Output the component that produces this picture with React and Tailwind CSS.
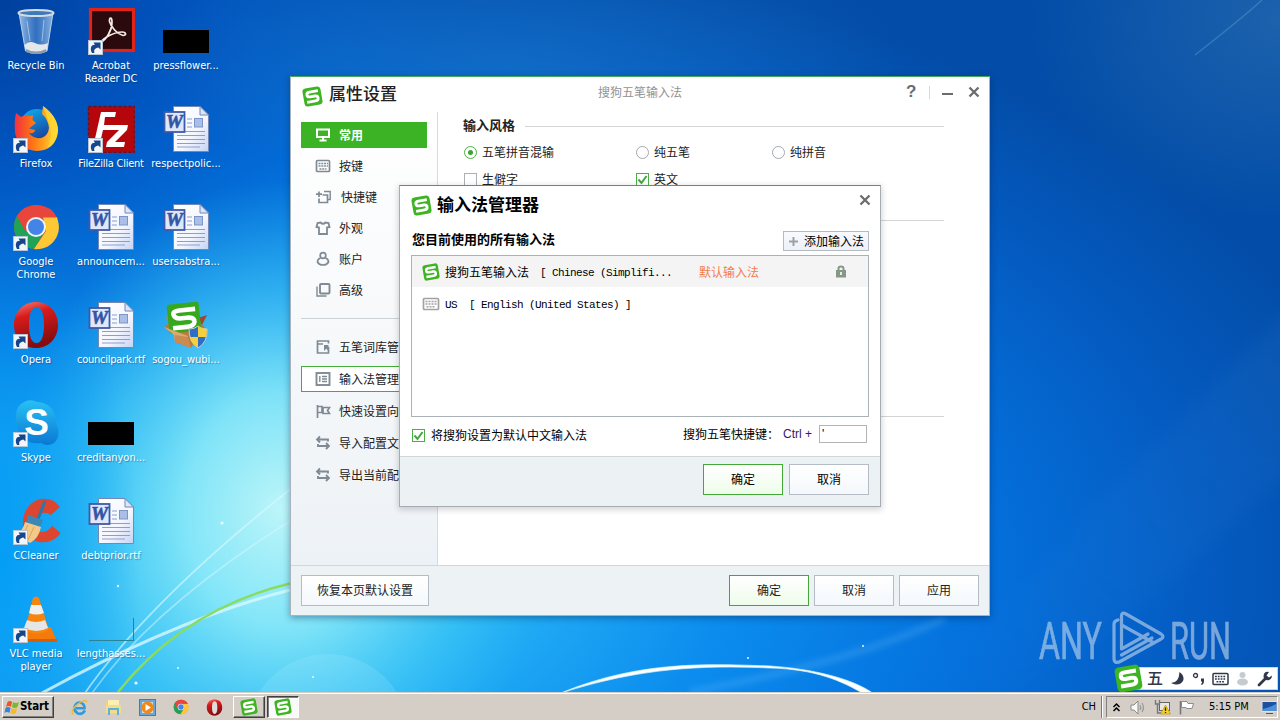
import React from "react";

const CJK = "font-['Noto_Sans_CJK_SC',sans-serif]";

function Wallpaper() {
  return (
    <svg className="absolute inset-0 h-full w-full" viewBox="0 0 1280 720" preserveAspectRatio="none">
      <defs>
        <radialGradient id="wBase" gradientUnits="userSpaceOnUse" cx="0" cy="0" r="1" gradientTransform="translate(250 570) scale(1150 640)">
          <stop offset="0" stopColor="#4fd0fa" />
          <stop offset=".2" stopColor="#27b4f7" />
          <stop offset=".42" stopColor="#0b8cee" />
          <stop offset=".64" stopColor="#0470dc" />
          <stop offset=".85" stopColor="#0459be" />
          <stop offset="1" stopColor="#034da8" />
        </radialGradient>
        <radialGradient id="wGlow" gradientUnits="userSpaceOnUse" cx="0" cy="0" r="1" gradientTransform="translate(280 510) scale(270 330)">
          <stop offset="0" stopColor="#bcf5f9" />
          <stop offset=".35" stopColor="#8ceaf8" stopOpacity=".88" />
          <stop offset=".7" stopColor="#48cdf4" stopOpacity=".5" />
          <stop offset="1" stopColor="#30bdf0" stopOpacity="0" />
        </radialGradient>
        <radialGradient id="wLeft" gradientUnits="userSpaceOnUse" cx="0" cy="0" r="1" gradientTransform="translate(0 560) scale(140 330)">
          <stop offset="0" stopColor="#009cf6" stopOpacity=".9" />
          <stop offset="1" stopColor="#0094f0" stopOpacity="0" />
        </radialGradient>
        <radialGradient id="wTopLeft" gradientUnits="userSpaceOnUse" cx="0" cy="0" r="1" gradientTransform="translate(0 0) scale(420 430)">
          <stop offset="0" stopColor="#00409e" />
          <stop offset=".4" stopColor="#0050bc" stopOpacity=".75" />
          <stop offset="1" stopColor="#0068d0" stopOpacity="0" />
        </radialGradient>
        <radialGradient id="wTop" gradientUnits="userSpaceOnUse" cx="0" cy="0" r="1" gradientTransform="translate(520 60) scale(380 130)">
          <stop offset="0" stopColor="#2486cc" stopOpacity=".35" />
          <stop offset="1" stopColor="#2c8ad0" stopOpacity="0" />
        </radialGradient>
        <radialGradient id="wCorner" gradientUnits="userSpaceOnUse" cx="0" cy="0" r="1" gradientTransform="translate(1280 20) scale(250 200)">
          <stop offset="0" stopColor="#4a88b4" stopOpacity=".35" />
          <stop offset="1" stopColor="#4a88b4" stopOpacity="0" />
        </radialGradient>
        <linearGradient id="wRay" x1="0" y1="1" x2="1" y2="0">
          <stop offset="0" stopColor="#7cc0f4" stopOpacity="0" />
          <stop offset="1" stopColor="#7cc0f4" stopOpacity=".2" />
        </linearGradient>
        <filter id="soft" x="-20%" y="-20%" width="140%" height="140%"><feGaussianBlur stdDeviation="10" /></filter>
        <filter id="soft2" x="-20%" y="-50%" width="140%" height="200%"><feGaussianBlur stdDeviation="3" /></filter>
        <filter id="soft1" x="-20%" y="-20%" width="140%" height="140%"><feGaussianBlur stdDeviation=".7" /></filter>
      </defs>
      <rect width="1280" height="720" fill="url(#wBase)" />
      <rect width="420" height="430" fill="url(#wTopLeft)" />
      <rect width="1280" height="300" fill="url(#wTop)" />
      <rect x="1000" width="280" height="240" fill="url(#wCorner)" />
      <rect y="170" width="560" height="550" fill="url(#wGlow)" />
      <rect y="220" width="150" height="500" fill="url(#wLeft)" />
      <path d="M1195 55Q1240 20 1262 0" stroke="#6aa0d0" strokeWidth="1.500" opacity=".4" fill="none" />
      <path d="M840 720Q1000 620 1100 500L1300 300V460Q1100 660 960 720Z" fill="url(#wRay)" opacity=".35" filter="url(#soft)" />
      <path d="M690 692Q860 660 945 618" stroke="#7cc8ff" strokeWidth="6" opacity=".25" fill="none" filter="url(#soft2)" />
      <circle cx="328" cy="735" r="81" fill="#b9f1ff" opacity=".16" />
      <path d="M561 693C640 660 710 664 770 666C812 669 852 678 874 694L864 694C842 681 815 669 770 668C700 665 640 668 561 693Z" fill="#fff" stroke="#d9f3ff" strokeWidth=".7" filter="url(#soft1)" />
      <g fill="none" filter="url(#soft1)">
        <path d="M42 693Q180 618 290 590" stroke="#d8f8ff" strokeWidth="3" opacity=".8" />
        <path d="M85 693Q150 600 292 488" stroke="#d8f8ff" strokeWidth="1.800" opacity=".65" />
        <path d="M92 693Q155 605 292 520" stroke="#d8f8ff" strokeWidth="1.500" opacity=".5" />
        <path d="M118 692Q185 608 292 583" stroke="#8bdc5c" strokeWidth="2.400" />
      </g>
      <g fill="#e6fbff">
        <circle cx="222" cy="523" r="1.600" /><circle cx="118" cy="586" r="1.200" /><circle cx="136" cy="683" r="1.600" /><circle cx="178" cy="668" r="1" /><circle cx="748" cy="658" r="1" /><circle cx="863" cy="646" r="1" /><circle cx="313" cy="677" r="1" />
      </g>
    </svg>
  );
}

function SogouLogo({ size = 20 }) {
  return (
    <svg width={size} height={size} viewBox="0 0 24 24" className="block shrink-0">
      <g transform="rotate(-10 12 12)">
        <rect x="1.6" y="1.6" width="20.8" height="20.8" rx="3.6" fill="#3eb422" />
        <path d="M19.2 6.500H9.400Q6 6.500 6 9.200T9.400 11.900H14.800Q18 11.900 18 14.700T14.600 17.500H4.800" fill="none" stroke="#fff" strokeWidth="3.300" />
      </g>
    </svg>
  );
}

function Shortcut() {
  return (
    <svg className="absolute bottom-[-1px] left-[1px]" width="15" height="15" viewBox="0 0 15 15">
      <rect x=".5" y=".5" width="14" height="14" fill="#f2f6fa" stroke="#b8c4d0" />
      <path d="M4 13C1.500 8 3.500 4.500 7 4.800L5.500 2.500H12.500V9.500L10.300 7.500C7 8 5.500 10 6.500 13Z" fill="#16458c" />
    </svg>
  );
}

function WordDoc() {
  return (
    <svg width="48" height="48" viewBox="0 0 48 48">
      <defs><linearGradient id="doc" x1="0" y1="0" x2="1" y2="1"><stop offset="0" stopColor="#fff" /><stop offset=".6" stopColor="#f4f6ff" /><stop offset="1" stopColor="#c4d2f2" /></linearGradient></defs>
      <path d="M11.500 1.500H38L46.500 10V46.500H11.500Z" fill="url(#doc)" stroke="#7388b4" />
      <path d="M38 1.500V10H46.500Z" fill="#dce6fa" stroke="#7388b4" />
      <path d="M25 14H30M25 18H30M25 22H30M15 26.500H43M15 30.500H43M15 34.500H43M15 38.500H43M15 42H38" stroke="#8a9fd0" strokeWidth="1.100" />
      <rect x="32.500" y="13.500" width="8" height="8.500" fill="#a9bfe8" stroke="#7c94c8" />
      <rect x="2.500" y="7" width="20" height="20" fill="#dfe8fa" stroke="#3d5aa8" strokeWidth="1.800" />
      <text x="12.500" y="23" fontFamily="Liberation Serif, serif" fontSize="18" fontWeight="700" fontStyle="italic" fill="#3454a4" stroke="#3454a4" strokeWidth=".6" textAnchor="middle" textLength="17" lengthAdjust="spacingAndGlyphs">W</text>
    </svg>
  );
}

function RecycleBin() {
  return (
    <svg width="48" height="48" viewBox="0 0 48 48">
      <defs><linearGradient id="bin" x1="0" x2="1"><stop offset="0" stopColor="#c8e2f8" stopOpacity=".75" /><stop offset=".5" stopColor="#6ea4dc" stopOpacity=".45" /><stop offset="1" stopColor="#b8d8f0" stopOpacity=".75" /></linearGradient></defs>
      <path d="M7 6L13.500 44Q24 49 35 44L41 6Z" fill="url(#bin)" stroke="#b4d0ea" strokeWidth="1" />
      <path d="M12.500 38Q17 33 23 36T36 36L35 43Q24 48 13.500 43Z" fill="#e4e8ea" />
      <path d="M14 42Q24 47 34 42V45Q24 49 14 45Z" fill="#8d9ca8" />
      <ellipse cx="24" cy="6" rx="17.500" ry="3" fill="#3f79bc" stroke="#d5dce2" strokeWidth="2" />
      <path d="M15 14L18 34M32 13L30 34" stroke="#e8f4ff" strokeWidth="1" opacity=".5" />
    </svg>
  );
}

function Acrobat() {
  return (
    <svg width="48" height="48" viewBox="0 0 48 48">
      <rect x="3.500" y="2.500" width="43" height="41" fill="#2a0a0c" stroke="#e2231a" strokeWidth="3.200" />
      <path d="M13 36C19 33 25 24 25 15C25 10 22 10 22.500 14.500C24 20 30 27 36 28.500C40 28.500 39 25 35 25C28 25 17 30 13 36Z" fill="none" stroke="#f6eaea" strokeWidth="1.700" />
    </svg>
  );
}

function Firefox() {
  return (
    <svg width="48" height="48" viewBox="0 0 48 48">
      <defs>
        <linearGradient id="ff" x1="0" y1=".3" x2="1" y2=".3"><stop offset="0" stopColor="#f2303f" /><stop offset=".45" stopColor="#ff7a12" /><stop offset="1" stopColor="#ffdf35" /></linearGradient>
        <linearGradient id="ffg" x1="0" y1="0" x2=".5" y2="1"><stop offset="0" stopColor="#0eb4f2" /><stop offset="1" stopColor="#1a3f9c" /></linearGradient>
      </defs>
      <circle cx="25" cy="21" r="17" fill="url(#ffg)" />
      <path d="M4 8L9 12Q13 9 18 11L21 10L20.500 15L24 18L17 23.500L23 25Q22 29 17 28Q21 34 29 33Q36 31 37 23Q36 14 30 9L31 1Q46 12 46 26Q44 45 25 46Q7 45 3 28Q2 16 4 8Z" fill="url(#ff)" />
      <path d="M31 1Q46 12 46 26Q45 38 35 43Q41 33 38 21Q34 10 31 1Z" fill="#ffd932" opacity=".75" />
    </svg>
  );
}

function FileZilla() {
  return (
    <svg width="48" height="48" viewBox="0 0 48 48">
      <rect x="1.500" y="1.500" width="46" height="46" fill="#b5060c" stroke="#7c0a10" strokeWidth="1.500" strokeDasharray="3 2" />
      <path d="M14 7H29L28 12H18L17 20H26L25 25H16L13 38H7Z" fill="#fff" />
      <path d="M25 20H41L40 25L28 37H38L37 42H19L20 37L32 25H24Z" fill="#fff" />
    </svg>
  );
}

function Chrome({ size = 48 }) {
  return (
    <svg width={size} height={size} viewBox="0 0 48 48">
      <circle cx="24" cy="24" r="22" fill="#e8453c" />
      <path d="M5 13A22 22 0 0 0 22 46L33 28L24 24L14 29Z" fill="#1fa356" />
      <path d="M46 18A22 22 0 0 1 22 46L34 28L31 14H45Z" fill="#fdc833" />
      <path d="M5 13Q12 2 25 2Q40 3 45 14.500H24L14 29Z" fill="#e8453c" />
      <circle cx="24" cy="24" r="10" fill="#f4f4f4" /><circle cx="24" cy="24" r="8" fill="#4284e8" />
    </svg>
  );
}

function Opera({ size = 48 }) {
  return (
    <svg width={size} height={size} viewBox="0 0 48 48">
      <defs><linearGradient id="op" x1="0" y1="0" x2=".3" y2="1"><stop offset="0" stopColor="#f68075" /><stop offset=".35" stopColor="#d81b1b" /><stop offset="1" stopColor="#860d0d" /></linearGradient></defs>
      <path fillRule="evenodd" fill="url(#op)" d="M24 1C37 1 46 11 46 24S37 47 24 47S2 37 2 24S11 1 24 1ZM24.500 6C19 6 17 14 17 24S19 42 24.500 42S32 34 32 24S30 6 24.500 6Z" />
    </svg>
  );
}

function SogouBox() {
  return (
    <svg width="48" height="48" viewBox="0 0 48 48">
      <path d="M2 25L12 20L38 21L45 29L36 34L29 47L13 41L12 32Z" fill="#b97a44" />
      <path d="M36 17L45 14L40 24Z" fill="#a4452c" />
      <path d="M3 15L11 18L8 23Z" fill="#c9803f" />
      <g transform="rotate(-6 23 17)"><rect x="6" y="2" width="32" height="29" rx="2" fill="#36a81c" />
        <path d="M34 9H18Q11 9 12 13T20 17H27Q33 18 32 22T24 26H10" fill="none" stroke="#fff" strokeWidth="4.600" /></g>
      <path d="M2 26L26 35L22 42L13 41L12 34Z" fill="#dfa76c" /><path d="M13 34L26 36L29 47L13 41Z" fill="#c98b52" />
      <path d="M27 28Q33 28 36 25Q39 28 45 28Q46 41 36 47Q27 41 27 28Z" fill="#2e6fc6" stroke="#c8ccd0" />
      <path d="M36 25V36H44Q45 32 45 28Q39 28 36 25ZM36 36V46.500Q29 43 27.500 36Z" fill="#f4cf3e" />
    </svg>
  );
}

function Skype() {
  return (
    <svg width="48" height="48" viewBox="0 0 48 48">
      <defs><linearGradient id="sk" x1="0" y1="0" x2="0" y2="1"><stop offset="0" stopColor="#28c0f4" /><stop offset="1" stopColor="#0a78d4" /></linearGradient></defs>
      <path d="M14 2Q20 0 25 3Q43 4 44 24Q50 36 42 44Q35 48 29 44Q8 46 5 26Q0 8 14 2Z" fill="url(#sk)" />
      <text x="24.500" y="36" fontFamily="Liberation Sans, sans-serif" fontWeight="700" fontSize="37" fill="#fff" textAnchor="middle">S</text>
    </svg>
  );
}

function CCleaner() {
  return (
    <svg width="48" height="48" viewBox="0 0 48 48">
      <path d="M48 10L39 18Q31 13 26 19Q21 29 29 35Q36 35 40 29L49 36Q40 47 27 45Q9 40 11 22Q14 6 28 2Q41 0 48 10Z" fill="#dc4630" />
      <path d="M33 4L26 22" stroke="#2878ae" strokeWidth="3" />
      <path d="M16 18L31 23L28 30L14 26Z" fill="#3c88b4" />
      <path d="M13 25L29 30Q27 41 18 46L4 37Q11 34 13 25Z" fill="#f4c886" /><path d="M16 28L10 40M22 30L16 43" stroke="#dba660" />
    </svg>
  );
}

function Vlc() {
  return (
    <svg width="48" height="48" viewBox="0 0 48 48">
      <path d="M11 32H39L45 47H6Z" fill="#f47b0a" /><path d="M6 44H45V47H6Z" fill="#d85d04" />
      <path d="M21 3Q24 0 27 3L37 35Q25 42 13 35Z" fill="#f8860e" />
      <path d="M19 10H29L32 18Q24 21 17 18Z" fill="#f0f0f0" /><path d="M15 25Q24 29 33 25L36 33Q25 39 12 33Z" fill="#e4e6e8" />
    </svg>
  );
}

function BlackThumb() {
  return <div className="mt-[22px] h-[23px] w-[46px] bg-black" />;
}

function OutlineThumb() {
  return <div className="mt-[22px] ml-[1px] h-[23px] w-[45px] border-r border-b border-[#2c8396]" />;
}

const desktop = [
  { label: ["Recycle Bin"], icon: <RecycleBin /> },
  { label: ["Firefox"], icon: <Firefox />, link: true },
  { label: ["Google", "Chrome"], icon: <Chrome />, link: true },
  { label: ["Opera"], icon: <Opera />, link: true },
  { label: ["Skype"], icon: <Skype />, link: true },
  { label: ["CCleaner"], icon: <CCleaner />, link: true },
  { label: ["VLC media", "player"], icon: <Vlc />, link: true },
  { label: ["Acrobat", "Reader DC"], icon: <Acrobat />, link: true },
  { label: ["FileZilla Client"], icon: <FileZilla />, link: true, tight: true },
  { label: ["announcem..."], icon: <WordDoc /> },
  { label: ["councilpark.rtf"], icon: <WordDoc />, tight: true },
  { label: ["creditanyon..."], icon: <BlackThumb /> },
  { label: ["debtprior.rtf"], icon: <WordDoc /> },
  { label: ["lengthasses..."], icon: <OutlineThumb /> },
  { label: ["pressflower..."], icon: <BlackThumb /> },
  { label: ["respectpolic..."], icon: <WordDoc /> },
  { label: ["usersabstra..."], icon: <WordDoc /> },
  { label: ["sogou_wubi..."], icon: <SogouBox /> },
];

function DesktopIcons() {
  return (
    <div className="relative grid w-[225px] grid-flow-col grid-cols-[repeat(3,75px)] grid-rows-[repeat(7,98px)] pt-[7px]">
      {desktop.map((d) => (
        <div key={d.label.join()} className="-ml-[3px] flex flex-col items-center">
          <div className="relative flex h-[47px] w-[48px] items-start justify-center">
            <div className="flex h-full items-center justify-center">{d.icon}</div>
            {d.link && <Shortcut />}
          </div>
          <div className={`mt-[5px] text-center font-['DejaVu_Sans_Condensed','DejaVu_Sans',sans-serif] text-[11px] leading-[13px] font-normal whitespace-nowrap text-white [font-stretch:condensed] [text-shadow:1px_1px_1px_rgba(0,40,90,0.4)] ${d.tight ? "tracking-[-0.25px]" : ""}`}>
            {d.label.map((l) => <div key={l}>{l}</div>)}
          </div>
        </div>
      ))}
    </div>
  );
}

const glyphs = {
  monitor: <path d="M2 2.500H14V10H2ZM8 10V13.500M4.500 13.500H11.500" strokeWidth="2" />,
  keys: <><rect x="1.500" y="2.500" width="13" height="11" rx="1" strokeWidth="1.700" /><path d="M3.500 5.500H13M3.500 8H13M4.500 11H11.500" strokeWidth="1.600" strokeDasharray="2 .8" /></>,
  quick: <><path d="M4 9.500V13.500H12.500V6H7.500" strokeWidth="1.700" /><path d="M9 2.500H15.200V10.500H13" /><path d="M4 2.500V8M1 5.200H7" strokeWidth="1.700" /></>,
  shirt: <path d="M5.500 2.500Q8 5 10.500 2.500L13.500 3L14.500 7L12 7.500V14H4V7.500L1.500 7L2.500 3Z" strokeWidth="1.800" />,
  user: <><circle cx="8" cy="4.500" r="2.800" strokeWidth="1.700" /><path d="M5.500 7Q2.500 8 2.500 11Q4 14 8 14T13.500 11Q13.500 8 10.500 7" strokeWidth="1.700" /></>,
  layers: <><rect x="5" y="2" width="9.500" height="9.500" rx="1" strokeWidth="1.900" /><path d="M2 4.500V14H11.500" /></>,
  book: <><path d="M13.500 8V14H2.500V2H13.500V4.500M2.500 5H8" strokeWidth="1.700" /><path d="M9 6H13.500V12L11.200 9.800L9 12Z" fill="currentColor" stroke="none" /></>,
  list: <><rect x="1.500" y="2" width="13" height="12" strokeWidth="1.900" /><path d="M4.800 5V11M7 5.500H12M7 8H12M7 10.500H12" /></>,
  flag: <><path d="M2.500 2V15M2.500 3.500H7V9.500H2.500M7 4.500H14.500L12.500 7.500L14.500 10.500H8V4" strokeWidth="1.700" /></>,
  swap: <path d="M5 1.500L2 4.500L5 7.500M2 4.500H13V6.500M11 8L14 11L11 14M14 11H3V9" strokeWidth="1.800" />,
};

function Glyph({ name, color = "text-[#7f8a94]" }) {
  return (
    <svg width="16" height="16" viewBox="0 0 16 16" className={`shrink-0 ${color}`} fill="none" stroke="currentColor" strokeWidth="1.400">
      {glyphs[name]}
    </svg>
  );
}

function NavItem({ icon, text, active, focused, indent }) {
  return (
    <div className={`flex h-[26px] w-[126px] items-center overflow-hidden border pl-[13px] text-[12px] whitespace-nowrap ${active ? "border-[#3cb324] bg-[#3cb324] font-bold text-white" : focused ? "border-[#42ad38] bg-white text-[#222]" : "border-transparent text-[#222]"}`}>
      <Glyph name={icon} color={active ? "text-white" : "text-[#7f8a94]"} />
      <span className={indent ? "ml-[10px]" : "ml-[8px]"}>{text}</span>
    </div>
  );
}

function Check({ checked }) {
  return (
    <span className={`flex h-[13px] w-[13px] shrink-0 items-center justify-center border bg-white ${checked ? "border-[#4caf45]" : "border-[#adb1b5]"}`}>
      {checked && <svg width="11" height="11" viewBox="0 0 11 11"><path d="M1.500 5.500L4.500 9L9.500 2" fill="none" stroke="#46a440" strokeWidth="2" /></svg>}
    </span>
  );
}

function Radio({ checked }) {
  return (
    <span className={`flex h-[13px] w-[13px] shrink-0 items-center justify-center rounded-full border bg-white ${checked ? "border-[#4caf45]" : "border-[#a5a9ad]"}`}>
      {checked && <span className="h-[5px] w-[5px] rounded-full bg-[#3ca334]" />}
    </span>
  );
}

function Option({ width, control, children }) {
  return <div className={`flex items-center gap-[5px] ${width}`}>{control}<span>{children}</span></div>;
}

function Button({ primary, wide, children }) {
  return (
    <button className={`h-[31px] border pb-px text-[12px] ${wide ? "w-[128px]" : "w-[80px]"} ${primary ? "border-[#43a838] bg-linear-to-b from-white to-[#eefcea]" : "border-[#b5bcc5] bg-linear-to-b from-white to-[#f4f8fc]"}`}>
      {children}
    </button>
  );
}

function CloseX() {
  return <svg width="12" height="12" viewBox="0 0 12 12"><path d="M1.500 1.500L10.500 10.500M10.500 1.500L1.500 10.500" stroke="#6c6c6c" strokeWidth="2.300" /></svg>;
}

function SettingsWindow() {
  return (
    <div className={`absolute top-[76px] left-[290px] flex h-[540px] w-[700px] flex-col border border-[#a7b4bd] border-t-[#45a85a] bg-white text-[12px] leading-[16px] text-[#222] shadow-[0_2px_7px_rgba(0,30,70,0.4)] ${CJK}`}>
      <div className="grid h-[35px] shrink-0 grid-cols-3 pt-[3px]">
        <div className="flex items-center pl-[11px]">
          <SogouLogo size={21} />
          <span className="mt-[-6px] ml-[6px] text-[17px] leading-[24px] font-medium">属性设置</span>
        </div>
        <div className="mt-[-8px] flex items-center justify-center text-[#929292]">搜狗五笔输入法</div>
        <div className="mt-[-8px] flex items-center justify-end pr-[9px]">
          <span className="w-[11px] font-['Liberation_Sans',sans-serif] text-[17px] font-bold text-[#6c6c6c]">?</span>
          <span className="ml-[12px] h-[13px] w-px bg-[#d8d8d8]" />
          <span className="mt-[3px] ml-[12px] h-[2px] w-[11px] bg-[#6c6c6c]" />
          <span className="ml-[15px]"><CloseX /></span>
        </div>
      </div>
      <div className="flex min-h-0 flex-1">
        <div className="w-[147px] border-r border-[#d5dbe0] bg-linear-to-b from-white to-[#edf2f6] pt-[10px] pl-[10px]">
          <div className="flex flex-col gap-[5px]">
            <NavItem icon="monitor" text="常用" active />
            <NavItem icon="keys" text="按键" />
            <NavItem icon="quick" text="快捷键" indent />
            <NavItem icon="shirt" text="外观" />
            <NavItem icon="user" text="账户" />
            <NavItem icon="layers" text="高级" />
          </div>
          <div className="mt-[15px] h-px w-[126px] bg-[#ccd2d6]" />
          <div className="mt-[15px] flex flex-col gap-[6px]">
            <NavItem icon="book" text="五笔词库管理" />
            <NavItem icon="list" text="输入法管理器" focused />
            <NavItem icon="flag" text="快速设置向导" />
            <NavItem icon="swap" text="导入配置文件" />
            <NavItem icon="swap" text="导出当前配置" />
          </div>
        </div>
        <div className="flex flex-1 flex-col pt-[7px] pr-[45px] pl-[25px]">
          <div className="flex items-center">
            <span className="mt-[-2px] w-[62px] text-[13px] font-bold">输入风格</span>
            <span className="h-px flex-1 bg-[#d4d4d4]" />
          </div>
          <div className="mt-[11px] flex pl-px">
            <Option width="w-[172px]" control={<Radio checked />}>五笔拼音混输</Option>
            <Option width="w-[136px]" control={<Radio />}>纯五笔</Option>
            <Option width="w-[100px]" control={<Radio />}>纯拼音</Option>
          </div>
          <div className="mt-[11px] flex pl-px">
            <Option width="w-[172px]" control={<Check />}>生僻字</Option>
            <Option width="w-[136px]" control={<Check checked />}>英文</Option>
          </div>
          <div className="mt-[33px] h-px bg-[#d4d4d4]" />
          <div className="mt-[195px] h-px bg-[#d4d4d4]" />
        </div>
      </div>
      <div className="flex h-[50px] shrink-0 items-start border-t border-[#d0d8dd] bg-[#edf2f5] px-[10px] pt-[9px]">
        <Button wide>恢复本页默认设置</Button>
        <div className="ml-auto flex gap-[5px]">
          <Button primary>确定</Button>
          <Button>取消</Button>
          <Button>应用</Button>
        </div>
      </div>
    </div>
  );
}

function Mono({ children }) {
  return <span className="font-['Liberation_Mono',monospace] text-[11px] tracking-[-0.6px] whitespace-pre">{children}</span>;
}

function ManagerDialog() {
  return (
    <div className={`absolute top-[185px] left-[399px] flex h-[322px] w-[482px] flex-col border border-[#a6acb2] border-t-[#42a838] bg-white text-[12px] leading-[16px] text-black shadow-[0_2px_6px_1px_rgba(0,0,0,0.16)] ${CJK}`}>
      <div className="flex h-[38px] shrink-0 items-center pl-[11px]">
        <SogouLogo size={21} />
        <span className="mt-[-3px] ml-[5px] text-[17px] leading-[24px] font-bold">输入法管理器</span>
        <span className="mt-[-10px] mr-[9px] ml-auto"><CloseX /></span>
      </div>
      <div className="flex flex-1 flex-col pt-[7px] pr-[11px] pl-[11px]">
        <div className="flex h-[20px] items-center justify-between">
          <span className="mt-[-5px] ml-px text-[13px] font-bold">您目前使用的所有输入法</span>
          <button className="flex h-[20px] w-[86px] items-center border border-[#b4b9c3] bg-linear-to-b from-[#f9fafe] to-[#edf1f8] pl-[5px]">
            <svg width="9" height="9" viewBox="0 0 9 9"><path d="M4.500 0V9M0 4.500H9" stroke="#9ba1a8" strokeWidth="2" /></svg>
            <span className="ml-[6px] whitespace-nowrap">添加输入法</span>
          </button>
        </div>
        <div className="mt-[4px] h-[162px] border border-[#abb1b8]">
          <div className="flex h-[31px] items-center bg-[#f4f4f4] pl-[10px]">
            <SogouLogo size={18} />
            <span className="ml-[5px] w-[84px] whitespace-nowrap">搜狗五笔输入法</span>
            <span className="ml-[11px] w-[159px]"><Mono>[ Chinese (Simplifi...</Mono></span>
            <span className="text-[#f47c4c]">默认输入法</span>
            <svg className="mr-[21px] ml-auto" width="12" height="13" viewBox="0 0 12 13"><path d="M3.500 6V3.500Q3.500 1.500 6 1.500T8.500 3.500V6" fill="none" stroke="#859785" strokeWidth="2" /><rect x="1" y="5" width="10" height="7.500" fill="#859785" /><rect x="5.200" y="7" width="1.600" height="3" fill="#fff" /></svg>
          </div>
          <div className="flex h-[33px] items-center pl-[10px]">
            <svg width="18" height="14" viewBox="0 0 18 14"><rect x="1.500" y="1.500" width="15" height="11" rx="1" fill="none" stroke="#a2a2a2" strokeWidth="1.700" /><path d="M3.500 4.500H15.500M3.500 7H15.500M4.500 9.800H13.500" stroke="#a2a2a2" strokeWidth="1.600" strokeDasharray="2 1" /></svg>
            <span className="ml-[5px]"><Mono>US  [ English (United States) ]</Mono></span>
          </div>
        </div>
        <div className="flex items-center pt-[7px]">
          <span className="mt-[3px] ml-px"><Check checked /></span>
          <span className="mt-[3px] ml-[6px]">将搜狗设置为默认中文输入法</span>
          <span className="ml-auto">搜狗五笔快捷键：</span>
          <span className="ml-[4px] w-[36px] font-['Liberation_Sans',sans-serif] whitespace-nowrap text-[#3a1674]">Ctrl +</span>
          <span className="mr-[2px] flex h-[18px] w-[48px] items-center border border-[#b4b4b4] pl-[2px] font-['Liberation_Sans',sans-serif]">'</span>
        </div>
      </div>
      <div className="flex h-[50px] shrink-0 justify-end gap-[6px] border-t border-[#cfd7dc] bg-[#ecf1f4] pt-[7px] pr-[11px]">
        <Button primary>确定</Button>
        <Button>取消</Button>
      </div>
    </div>
  );
}

function AnyRun() {
  return (
    <svg className="absolute top-[595px] left-[1034px]" width="210" height="96" viewBox="0 -10 210 96" opacity=".6">
      <g fill="#c5d9ee" stroke="#c5d9ee" strokeWidth=".7" fontFamily="Roboto, sans-serif" fontSize="52" fontWeight="400">
        <text x="5" y="54" textLength="63" lengthAdjust="spacingAndGlyphs">ANY</text>
        <text x="136" y="54" textLength="61" lengthAdjust="spacingAndGlyphs">RUN</text>
      </g>
      <path d="M80 53V19Q80 16 84 15M80 53Q80 60 87 56L127 34Q131 31.500 127 29L92 9Q87.500 6.500 87.500 11V44L114 29M87.500 20L120 38M87.500 50L118 33" fill="none" stroke="#c5d9ee" strokeWidth="3.200" strokeLinejoin="round" strokeLinecap="round" />
    </svg>
  );
}

function ImeBar() {
  return (
    <div className="absolute top-[667px] left-[1121px] flex h-[23px] w-[157px] items-center border border-[#cbd5e4] bg-white text-[#30384a]">
      <div className="relative -ml-[8px] h-[29px] w-[29px]"><SogouLogo size={29} /></div>
      <span className={`mt-[-3px] ml-[4px] w-[16px] text-[16px] leading-[20px] font-medium ${CJK}`}>五</span>
      <svg className="ml-[7px]" width="15" height="15" viewBox="0 0 15 15"><path d="M9.500 1Q15 5 13 10Q9 16 1 12Q9 12 9.500 1Z" fill="currentColor" /></svg>
      <svg className="ml-[7px]" width="14" height="15" viewBox="0 0 14 15"><circle cx="3.500" cy="4.500" r="2" fill="none" stroke="currentColor" strokeWidth="1.300" /><path d="M9 7.500H12V10.500Q12 13 9.500 14L9 13Q10.500 12 10 10.500H9Z" fill="currentColor" /></svg>
      <svg className="ml-[6px]" width="17" height="14" viewBox="0 0 17 14"><rect x="1" y="1.500" width="15" height="11" rx="1" fill="none" stroke="currentColor" strokeWidth="1.500" /><path d="M3 4.500H14M3 7H14M4.500 9.800H12.500" stroke="currentColor" strokeWidth="1.400" strokeDasharray="1.800 1" /></svg>
      <svg className="ml-[7px]" width="13" height="15" viewBox="0 0 13 15"><circle cx="6.500" cy="4" r="3" fill="#c4cbd1" /><ellipse cx="6.500" cy="11" rx="5.500" ry="3.500" fill="#c4cbd1" /></svg>
      <svg className="ml-[8px]" width="16" height="16" viewBox="0 0 16 16"><path d="M2 14L8.500 7.500" stroke="currentColor" strokeWidth="2.800" strokeLinecap="round" /><path d="M12 1Q6.500 0 6.500 6Q8 10 12 9Q15 8 15 4.500L12 6.500L9.500 4.500Z" fill="currentColor" /></svg>
    </div>
  );
}

function WindowsFlag() {
  return (
    <svg width="16" height="16" viewBox="0 0 16 16">
      <path d="M3.500 3Q6 1 8 3L7 8Q5 6 2 8Z" fill="#ec5622" /><path d="M9 3Q12 5 15 3L13.500 8Q11 10 8 8Z" fill="#7ab830" />
      <path d="M1.500 9Q4 7 6.500 9L5.500 14Q3 12 .5 14Z" fill="#3b83d8" /><path d="M7.500 9Q10 11 13 9L12 14Q9 16 6.500 14Z" fill="#f6bb20" />
    </svg>
  );
}

function Taskbar() {
  return (
    <div className="absolute inset-x-0 bottom-0 flex h-[28px] items-center border-t border-[#d4d0c8] bg-[#d5cec7] pt-px font-['DejaVu_Sans_Condensed','DejaVu_Sans',sans-serif] text-black shadow-[inset_0_1px_0_#fff]">
      <div className="ml-[2px] flex h-[22px] w-[52px] items-center border border-white border-r-[#404040] border-b-[#404040] pl-px shadow-[inset_-1px_-1px_0_#808080]">
        <WindowsFlag />
        <span className="text-[11.500px] font-bold tracking-[-0.1px]">Start</span>
      </div>
      <div className="ml-[17px] flex items-center gap-[17px]">
        <svg width="17" height="17" viewBox="0 0 17 17"><path d="M14 11.500Q11 16 7 14.500Q2.500 12 3.500 8Q5 3.500 9 3.500Q13.500 4.500 13.500 9.200H5" fill="none" stroke="#2f9be0" strokeWidth="2.600" /><path d="M2 15.500Q-1 11 7 5Q15 -1 16 3.500" fill="none" stroke="#edbd3a" strokeWidth="1.400" /></svg>
        <svg width="17" height="17" viewBox="0 0 17 17"><path d="M1 3H6L7 5H15V15H1Z" fill="#f3d374" /><path d="M3 1H14V7H3Z" fill="#fbefb4" /><path d="M1 6H16V14H1Z" fill="#f5dc86" /><path d="M4 16V10H13V16" fill="none" stroke="#5bb1e0" strokeWidth="2" /></svg>
        <svg width="17" height="17" viewBox="0 0 17 17"><rect x=".5" y=".5" width="16" height="16" fill="#68a8d8" stroke="#3e7eb4" /><rect x="3" y="3" width="11" height="11" fill="#c8e0f2" /><circle cx="8.500" cy="8.500" r="6" fill="#f58610" /><path d="M6.500 5L12 8.500L6.500 12Z" fill="#fff" /></svg>
        <Chrome size={16} />
        <span className="rounded-full bg-[#ddd]"><Opera size={17} /></span>
      </div>
      <div className="ml-[10px] flex h-[22px] w-[32px] items-center justify-center border border-white border-r-[#404040] border-b-[#404040] shadow-[inset_-1px_-1px_0_#808080]"><SogouLogo size={18} /></div>
      <div className="ml-[2px] flex h-[22px] w-[32px] items-center justify-center border border-[#404040] border-r-white border-b-white bg-[#fbfafa] shadow-[inset_1px_1px_0_#808080]"><SogouLogo size={18} /></div>
      <span className="mr-[5px] ml-auto text-[11px]">CH</span>
      <div className="mr-[3px] h-[22px] w-[2px] border-l border-[#777] bg-white" />
      <div className="mr-[2px] flex h-[22px] w-[172px] items-center border border-[#808080] border-r-white border-b-white pl-[5px]">
        <svg width="9" height="11" viewBox="0 0 9 11"><path d="M1.500 5L4.500 2L7.500 5M1.500 9L4.500 6L7.500 9" fill="none" stroke="#000" strokeWidth="1.500" /></svg>
        <svg className="ml-[9px]" width="16" height="15" viewBox="0 0 16 15"><path d="M1 5H4L8 1V14L4 10H1Z" fill="#f8f8f8" stroke="#8a8a8a" /><path d="M10 5Q11.500 7.500 10 10M12 3Q15 7.500 12 12" fill="none" stroke="#999" strokeWidth="1.200" /></svg>
        <svg className="ml-[8px]" width="17" height="16" viewBox="0 0 17 16"><rect x="5.500" y="3.500" width="10" height="8" fill="#e8e8e8" stroke="#666" /><path d="M1.500 1V5H5.500V1M3.500 5V14H7" fill="none" stroke="#777" strokeWidth="1.400" /><path d="M11.500 6L16.500 15H6.500Z" fill="#fad11c" stroke="#b88b00" strokeWidth=".6" /><path d="M11.500 8.500V12M11.500 13V14" stroke="#222" strokeWidth="1.300" /></svg>
        <svg className="ml-[7px]" width="17" height="15" viewBox="0 0 17 15"><path d="M2.500 1V14.500" stroke="#777" strokeWidth="1.600" /><path d="M3.500 1.500H9L10 3.500H15.500L14 8.500H8.500L8 7.500H3.500Z" fill="#fff" stroke="#8c8c8c" /></svg>
        <span className="ml-[14px] text-[11px] whitespace-nowrap">5:15 PM</span>
        <svg className="mr-[-1px] ml-auto" width="17" height="15" viewBox="0 0 17 15"><rect x="1" y="1.500" width="15" height="10" fill="#1c4f9e" stroke="#d8e2f0" /><path d="M2 9Q8 8 15 4V11H2Z" fill="#4a8fdc" /><path d="M5 13.500H12" stroke="#555" /></svg>
      </div>
    </div>
  );
}

export default function App() {
  return (
    <div className="relative h-[720px] w-[1280px] overflow-hidden bg-[#0a6fd8]">
      <Wallpaper />
      <DesktopIcons />
      <SettingsWindow />
      <ManagerDialog />
      <ImeBar />
      <Taskbar />
      <AnyRun />
    </div>
  );
}
